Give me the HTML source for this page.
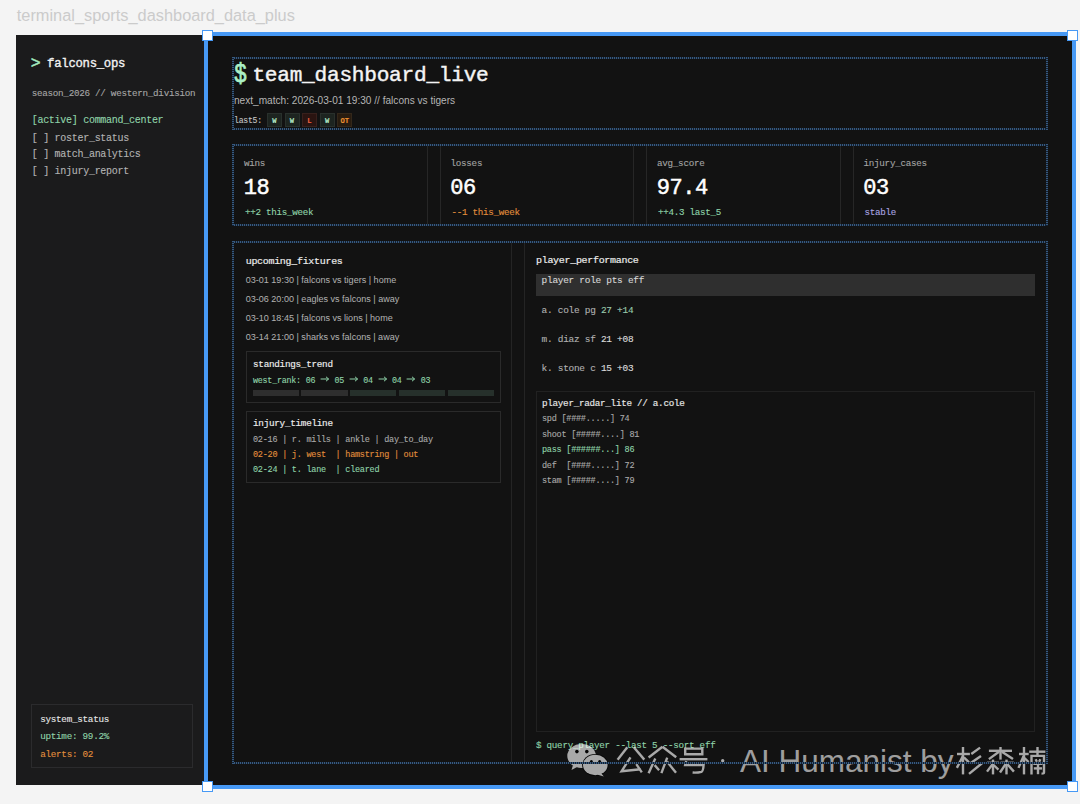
<!DOCTYPE html>
<html><head><meta charset="utf-8"><style>
html,body{margin:0;padding:0;}
body{width:1080px;height:804px;background:#f4f4f4;position:relative;overflow:hidden;}
.a{position:absolute;}
.t{position:absolute;white-space:pre;}
.m{font-family:"Liberation Mono", monospace;}
.s{font-family:"Liberation Sans", sans-serif;}
.badge{box-sizing:border-box;font-family:"Liberation Mono", monospace;font-weight:700;font-size:7.2px;line-height:16px;text-align:center;-webkit-text-stroke:0.1px currentColor;}
</style></head><body>
<div class="t s" style="left:16.80px;top:7.36px;font-size:16.350px;line-height:16.350px;color:#cbcbcb;font-weight:400;">terminal_sports_dashboard_data_plus</div>
<div class="a" style="left:16px;top:35px;width:188px;height:750px;background:#1b1b1c;"></div>
<div class="t m" style="left:30.70px;top:55.76px;font-size:16.500px;line-height:16.500px;color:#a5ecc0;font-weight:400;-webkit-text-stroke:0.45px #a5ecc0;">&gt;</div>
<div class="t m" style="left:47.10px;top:58.07px;font-size:12.314px;line-height:12.314px;color:#f2f2f2;font-weight:400;letter-spacing:-0.284px;-webkit-text-stroke:0.35px #f2f2f2;">falcons_ops</div>
<div class="t m" style="left:31.70px;top:89.36px;font-size:9.240px;line-height:9.240px;color:#a6a6a6;font-weight:400;letter-spacing:-0.264px;-webkit-text-stroke:0.12px #a6a6a6;">season_2026 // western_division</div>
<div class="t m" style="left:31.70px;top:116.47px;font-size:10.028px;line-height:10.028px;color:#8fd3a9;font-weight:400;letter-spacing:-0.287px;-webkit-text-stroke:0.12px #8fd3a9;">[active] command_center</div>
<div class="t m" style="left:31.70px;top:133.67px;font-size:10.028px;line-height:10.028px;color:#b3b3b3;font-weight:400;letter-spacing:-0.287px;-webkit-text-stroke:0.12px #b3b3b3;">[ ] roster_status</div>
<div class="t m" style="left:31.70px;top:149.87px;font-size:10.028px;line-height:10.028px;color:#b3b3b3;font-weight:400;letter-spacing:-0.287px;-webkit-text-stroke:0.12px #b3b3b3;">[ ] match_analytics</div>
<div class="t m" style="left:31.70px;top:166.97px;font-size:10.028px;line-height:10.028px;color:#b3b3b3;font-weight:400;letter-spacing:-0.287px;-webkit-text-stroke:0.12px #b3b3b3;">[ ] injury_report</div>
<div class="a" style="left:31px;top:704px;width:162px;height:64px;box-sizing:border-box;border:1px solid #2b2b2d;"></div>
<div class="t m" style="left:40.20px;top:714.84px;font-size:9.271px;line-height:9.271px;color:#e6e6e6;font-weight:400;letter-spacing:-0.265px;-webkit-text-stroke:0.12px #e6e6e6;">system_status</div>
<div class="t m" style="left:40.20px;top:732.44px;font-size:9.271px;line-height:9.271px;color:#8fd3a9;font-weight:400;letter-spacing:-0.265px;-webkit-text-stroke:0.12px #8fd3a9;">uptime: 99.2%</div>
<div class="t m" style="left:40.20px;top:750.04px;font-size:9.271px;line-height:9.271px;color:#e08e3c;font-weight:400;letter-spacing:-0.265px;-webkit-text-stroke:0.12px #e08e3c;">alerts: 02</div>
<div class="a" style="left:204px;top:32px;width:872px;height:757px;background:#4799f5;"></div>
<div class="a" style="left:208px;top:36px;width:864px;height:749px;background:#121212;"></div>
<div class="a" style="left:232px;top:57px;width:816px;height:2px;background:repeating-linear-gradient(90deg,#37597f 0 1px,#13202f 1px 2px);"></div>
<div class="a" style="left:232px;top:128px;width:816px;height:2px;background:repeating-linear-gradient(90deg,#37597f 0 1px,#13202f 1px 2px);"></div>
<div class="a" style="left:232px;top:57px;width:2px;height:73px;background:repeating-linear-gradient(180deg,#37597f 0 1px,#13202f 1px 2px);"></div>
<div class="a" style="left:1046px;top:57px;width:2px;height:73px;background:repeating-linear-gradient(180deg,#37597f 0 1px,#13202f 1px 2px);"></div>
<div class="t m" style="left:234.00px;top:66.45px;font-size:21.600px;line-height:21.600px;color:#abf0c6;font-weight:400;-webkit-text-stroke:0.6px #abf0c6;transform:scaleY(1.25);transform-origin:0 17px;">$</div>
<div class="t m" style="left:252.40px;top:64.60px;font-size:21.145px;line-height:21.145px;color:#f4f4f4;font-weight:400;letter-spacing:-0.249px;-webkit-text-stroke:0.42px #f4f4f4;">team_dashboard_live</div>
<div class="t s" style="left:234.00px;top:95.98px;font-size:10.100px;line-height:10.100px;color:#b5b5b5;font-weight:400;">next_match: 2026-03-01 19:30 // falcons vs tigers</div>
<div class="t m" style="left:234.00px;top:116.61px;font-size:8.138px;line-height:8.138px;color:#c2c2c2;font-weight:400;letter-spacing:-0.233px;-webkit-text-stroke:0.12px #c2c2c2;">last5:</div>
<div class="a badge" style="left:267px;top:113px;width:15px;height:13.5px;background:#1d2420;box-shadow:inset 0 0 0 1px #29302c;color:#b3e8c6;">W</div>
<div class="a badge" style="left:284.5px;top:113px;width:15px;height:13.5px;background:#1d2420;box-shadow:inset 0 0 0 1px #29302c;color:#b3e8c6;">W</div>
<div class="a badge" style="left:302px;top:113px;width:15px;height:13.5px;background:#2a1411;box-shadow:inset 0 0 0 1px #38201c;color:#ec6040;">L</div>
<div class="a badge" style="left:319.7px;top:113px;width:15px;height:13.5px;background:#1d2420;box-shadow:inset 0 0 0 1px #29302c;color:#b3e8c6;">W</div>
<div class="a badge" style="left:337.3px;top:113px;width:15px;height:13.5px;background:#281c10;box-shadow:inset 0 0 0 1px #33271a;color:#ec9030;">OT</div>
<div class="a" style="left:233px;top:145px;width:194.5px;height:80.5px;box-sizing:border-box;border:1px solid #262626;"></div>
<div class="t m" style="left:244.00px;top:158.56px;font-size:9.240px;line-height:9.240px;color:#a3a3a3;font-weight:400;letter-spacing:-0.264px;-webkit-text-stroke:0.12px #a3a3a3;">wins</div>
<div class="t m" style="left:243.80px;top:178.41px;font-size:22.048px;line-height:22.048px;color:#ffffff;font-weight:400;letter-spacing:-0.509px;-webkit-text-stroke:0.5px #ffffff;">18</div>
<div class="t m" style="left:245.00px;top:208.39px;font-size:9.188px;line-height:9.188px;color:#8fd3a9;font-weight:400;letter-spacing:-0.263px;-webkit-text-stroke:0.12px #8fd3a9;">++2 this_week</div>
<div class="a" style="left:439.5px;top:145px;width:194.5px;height:80.5px;box-sizing:border-box;border:1px solid #262626;"></div>
<div class="t m" style="left:450.50px;top:158.56px;font-size:9.240px;line-height:9.240px;color:#a3a3a3;font-weight:400;letter-spacing:-0.264px;-webkit-text-stroke:0.12px #a3a3a3;">losses</div>
<div class="t m" style="left:450.30px;top:178.41px;font-size:22.048px;line-height:22.048px;color:#ffffff;font-weight:400;letter-spacing:-0.509px;-webkit-text-stroke:0.5px #ffffff;">06</div>
<div class="t m" style="left:451.50px;top:208.39px;font-size:9.188px;line-height:9.188px;color:#e08e3c;font-weight:400;letter-spacing:-0.263px;-webkit-text-stroke:0.12px #e08e3c;">--1 this_week</div>
<div class="a" style="left:646px;top:145px;width:194.5px;height:80.5px;box-sizing:border-box;border:1px solid #262626;"></div>
<div class="t m" style="left:657.00px;top:158.56px;font-size:9.240px;line-height:9.240px;color:#a3a3a3;font-weight:400;letter-spacing:-0.264px;-webkit-text-stroke:0.12px #a3a3a3;">avg_score</div>
<div class="t m" style="left:656.80px;top:178.41px;font-size:22.048px;line-height:22.048px;color:#ffffff;font-weight:400;letter-spacing:-0.509px;-webkit-text-stroke:0.5px #ffffff;">97.4</div>
<div class="t m" style="left:658.00px;top:208.39px;font-size:9.188px;line-height:9.188px;color:#8fd3a9;font-weight:400;letter-spacing:-0.263px;-webkit-text-stroke:0.12px #8fd3a9;">++4.3 last_5</div>
<div class="a" style="left:852.5px;top:145px;width:194.5px;height:80.5px;box-sizing:border-box;border:1px solid #262626;"></div>
<div class="t m" style="left:863.50px;top:158.56px;font-size:9.240px;line-height:9.240px;color:#a3a3a3;font-weight:400;letter-spacing:-0.264px;-webkit-text-stroke:0.12px #a3a3a3;">injury_cases</div>
<div class="t m" style="left:863.30px;top:178.41px;font-size:22.048px;line-height:22.048px;color:#ffffff;font-weight:400;letter-spacing:-0.509px;-webkit-text-stroke:0.5px #ffffff;">03</div>
<div class="t m" style="left:864.50px;top:208.39px;font-size:9.188px;line-height:9.188px;color:#a9a3e0;font-weight:400;letter-spacing:-0.263px;-webkit-text-stroke:0.12px #a9a3e0;">stable</div>
<div class="a" style="left:232px;top:144px;width:816px;height:2px;background:repeating-linear-gradient(90deg,#37597f 0 1px,#13202f 1px 2px);"></div>
<div class="a" style="left:232px;top:224px;width:816px;height:2px;background:repeating-linear-gradient(90deg,#37597f 0 1px,#13202f 1px 2px);"></div>
<div class="a" style="left:232px;top:144px;width:2px;height:82px;background:repeating-linear-gradient(180deg,#37597f 0 1px,#13202f 1px 2px);"></div>
<div class="a" style="left:1046px;top:144px;width:2px;height:82px;background:repeating-linear-gradient(180deg,#37597f 0 1px,#13202f 1px 2px);"></div>
<div class="a" style="left:233px;top:242px;width:278.5px;height:521px;box-sizing:border-box;border:1px solid #242424;"></div>
<div class="a" style="left:524px;top:242px;width:523px;height:521px;box-sizing:border-box;border:1px solid #242424;"></div>
<div class="t m" style="left:245.70px;top:256.79px;font-size:9.975px;line-height:9.975px;color:#ececec;font-weight:400;letter-spacing:-0.285px;-webkit-text-stroke:0.19px #ececec;">upcoming_fixtures</div>
<div class="t s" style="left:245.70px;top:275.55px;font-size:9.050px;line-height:9.050px;color:#b3b3b3;font-weight:400;">03-01 19:30 | falcons vs tigers | home</div>
<div class="t s" style="left:245.70px;top:294.55px;font-size:9.050px;line-height:9.050px;color:#b3b3b3;font-weight:400;">03-06 20:00 | eagles vs falcons | away</div>
<div class="t s" style="left:245.70px;top:313.55px;font-size:9.050px;line-height:9.050px;color:#b3b3b3;font-weight:400;">03-10 18:45 | falcons vs lions | home</div>
<div class="t s" style="left:245.70px;top:332.55px;font-size:9.050px;line-height:9.050px;color:#b3b3b3;font-weight:400;">03-14 21:00 | sharks vs falcons | away</div>
<div class="a" style="left:245.5px;top:350.5px;width:255.5px;height:52.5px;box-sizing:border-box;border:1px solid #2a2a2a;"></div>
<div class="t m" style="left:253.00px;top:359.57px;font-size:9.313px;line-height:9.313px;color:#ececec;font-weight:400;letter-spacing:-0.266px;-webkit-text-stroke:0.177px #ececec;">standings_trend</div>
<div class="t m" style="left:253.00px;top:375.73px;font-size:8.400px;line-height:8.400px;color:#8fd3a9;font-weight:400;letter-spacing:-0.240px;-webkit-text-stroke:0.12px #8fd3a9;">west_rank: 06 <svg width="9.6" height="6" viewBox="0 0 9.6 6" style="vertical-align:0.5px"><path d="M0.6 3H8.6M6 0.8L8.6 3L6 5.2" fill="none" stroke="#8fd3a9" stroke-width="1"/></svg> 05 <svg width="9.6" height="6" viewBox="0 0 9.6 6" style="vertical-align:0.5px"><path d="M0.6 3H8.6M6 0.8L8.6 3L6 5.2" fill="none" stroke="#8fd3a9" stroke-width="1"/></svg> 04 <svg width="9.6" height="6" viewBox="0 0 9.6 6" style="vertical-align:0.5px"><path d="M0.6 3H8.6M6 0.8L8.6 3L6 5.2" fill="none" stroke="#8fd3a9" stroke-width="1"/></svg> 04 <svg width="9.6" height="6" viewBox="0 0 9.6 6" style="vertical-align:0.5px"><path d="M0.6 3H8.6M6 0.8L8.6 3L6 5.2" fill="none" stroke="#8fd3a9" stroke-width="1"/></svg> 03</div>
<div class="a" style="left:252.5px;top:389.5px;width:46.25px;height:6.25px;background:#2e2e2e;"></div>
<div class="a" style="left:301.25px;top:389.5px;width:46.25px;height:6.25px;background:#2e2e2e;"></div>
<div class="a" style="left:350.0px;top:389.5px;width:46.25px;height:6.25px;background:#26302b;"></div>
<div class="a" style="left:398.75px;top:389.5px;width:46.25px;height:6.25px;background:#26302b;"></div>
<div class="a" style="left:447.5px;top:389.5px;width:46.25px;height:6.25px;background:#26302b;"></div>
<div class="a" style="left:245.5px;top:410.5px;width:255.5px;height:72.5px;box-sizing:border-box;border:1px solid #2a2a2a;"></div>
<div class="t m" style="left:253.00px;top:418.82px;font-size:9.313px;line-height:9.313px;color:#ececec;font-weight:400;letter-spacing:-0.266px;-webkit-text-stroke:0.177px #ececec;">injury_timeline</div>
<div class="t m" style="left:253.00px;top:435.68px;font-size:8.505px;line-height:8.505px;color:#a8a8a8;font-weight:400;letter-spacing:-0.243px;-webkit-text-stroke:0.12px #a8a8a8;white-space:pre">02-16 | r. mills | ankle | day_to_day</div>
<div class="t m" style="left:253.00px;top:450.68px;font-size:8.505px;line-height:8.505px;color:#e08e3c;font-weight:400;letter-spacing:-0.243px;-webkit-text-stroke:0.12px #e08e3c;white-space:pre">02-20 | j. west  | hamstring | out</div>
<div class="t m" style="left:253.00px;top:465.68px;font-size:8.505px;line-height:8.505px;color:#8fd3a9;font-weight:400;letter-spacing:-0.243px;-webkit-text-stroke:0.12px #8fd3a9;white-space:pre">02-24 | t. lane  | cleared</div>
<div class="t m" style="left:536.00px;top:256.49px;font-size:9.975px;line-height:9.975px;color:#ececec;font-weight:400;letter-spacing:-0.285px;-webkit-text-stroke:0.19px #ececec;">player_performance</div>
<div class="a" style="left:536px;top:274px;width:499px;height:22px;background:#2f2f2f;"></div>
<div class="t m" style="left:541.60px;top:275.86px;font-size:9.450px;line-height:9.450px;color:#d6d6d6;font-weight:400;letter-spacing:-0.270px;-webkit-text-stroke:0.12px #d6d6d6;">player role pts eff</div>
<div class="t m" style="left:541.60px;top:305.76px;font-size:9.450px;line-height:9.450px;color:#b0b0b0;font-weight:400;letter-spacing:-0.270px;-webkit-text-stroke:0.12px #b0b0b0;">a. cole pg <span style="color:#8fd3a9">27 +14</span></div>
<div class="t m" style="left:541.60px;top:334.86px;font-size:9.450px;line-height:9.450px;color:#b0b0b0;font-weight:400;letter-spacing:-0.270px;-webkit-text-stroke:0.12px #b0b0b0;">m. diaz sf <span style="color:#e6e6e6">21 +08</span></div>
<div class="t m" style="left:541.60px;top:363.96px;font-size:9.450px;line-height:9.450px;color:#b0b0b0;font-weight:400;letter-spacing:-0.270px;-webkit-text-stroke:0.12px #b0b0b0;">k. stone c <span style="color:#e6e6e6">15 +03</span></div>
<div class="a" style="left:536px;top:391px;width:499px;height:341px;box-sizing:border-box;border:1px solid #212121;"></div>
<div class="t m" style="left:542.00px;top:399.36px;font-size:9.240px;line-height:9.240px;color:#e6e6e6;font-weight:400;letter-spacing:-0.264px;-webkit-text-stroke:0.176px #e6e6e6;">player_radar_lite // a.cole</div>
<div class="t m" style="left:542.00px;top:415.43px;font-size:8.505px;line-height:8.505px;color:#a8a8a8;font-weight:400;letter-spacing:-0.243px;-webkit-text-stroke:0.12px #a8a8a8;white-space:pre">spd [####.....] 74</div>
<div class="t m" style="left:542.00px;top:430.88px;font-size:8.505px;line-height:8.505px;color:#a8a8a8;font-weight:400;letter-spacing:-0.243px;-webkit-text-stroke:0.12px #a8a8a8;white-space:pre">shoot [#####....] 81</div>
<div class="t m" style="left:542.00px;top:446.33px;font-size:8.505px;line-height:8.505px;color:#8fd3a9;font-weight:400;letter-spacing:-0.243px;-webkit-text-stroke:0.12px #8fd3a9;white-space:pre">pass [######...] 86</div>
<div class="t m" style="left:542.00px;top:461.78px;font-size:8.505px;line-height:8.505px;color:#a8a8a8;font-weight:400;letter-spacing:-0.243px;-webkit-text-stroke:0.12px #a8a8a8;white-space:pre">def  [####.....] 72</div>
<div class="t m" style="left:542.00px;top:477.23px;font-size:8.505px;line-height:8.505px;color:#a8a8a8;font-weight:400;letter-spacing:-0.243px;-webkit-text-stroke:0.12px #a8a8a8;white-space:pre">stam [#####....] 79</div>
<div class="t m" style="left:536.00px;top:741.06px;font-size:9.240px;line-height:9.240px;color:#8fd3a9;font-weight:400;letter-spacing:-0.264px;-webkit-text-stroke:0.12px #8fd3a9;">$ query_player --last 5 --sort eff</div>
<svg class="a" style="left:0;top:0" width="1080" height="804" viewBox="0 0 1080 804"><g opacity="0.64">
<g fill="#ffffff">
<ellipse cx="581.6" cy="756" rx="14.3" ry="11.9"/>
<path d="M573 765 L571.5 770 L578 766.5 Z"/>
</g>
<ellipse cx="595.3" cy="765" rx="13.2" ry="11" fill="#000000"/>
<g fill="#ffffff">
<ellipse cx="595.3" cy="765" rx="12.3" ry="10.2"/>
<path d="M601 773 L603.8 776.6 L597 774.5 Z"/>
</g>
<g fill="#000000">
<circle cx="576.9" cy="751.6" r="1.8"/><circle cx="586.8" cy="751.6" r="1.8"/>
<circle cx="591.4" cy="761.5" r="1.5"/><circle cx="599.6" cy="761.5" r="1.5"/>
</g>
<circle cx="722.7" cy="760.7" r="1.7" fill="#ffffff"/>
<g fill="none" stroke="#ffffff" stroke-width="2.4" stroke-linecap="butt" stroke-linejoin="miter"><path d="M627.3 747.3L617.6 759.8"/><path d="M633.8 747.3L644.3 759.6"/><path d="M630.5 757.3L621.6 771.2L640.5 769.2"/><path d="M636.3 764.2L641.8 772.3"/><path d="M662.5 746.8L648.6 757.5"/><path d="M662.5 746.8L676.2 757.3"/><path d="M655.3 758.4L648.6 773.2"/><path d="M654.6 765.1L659.1 770.2"/><path d="M667.2 757.6L661.4 773.2"/><path d="M667.0 761.6L676.0 772.8"/><path d="M685.2 748.6H702.3V754.2H685.2Z"/><path d="M679.6 759.2H707.4"/><path d="M686.2 761.0L685.2 765.0H703.6Q703.2 771.2 701.5 771.8Q697 772.9 692.6 772.5"/><path d="M957.0 754.0H969.9"/><path d="M963.0 747.0V774.4"/><path d="M963.0 755.9L956.9 767.9"/><path d="M963.9 757.3L969.0 762.4"/><path d="M980.1 747.6L971.3 754.0"/><path d="M981.0 755.9L970.4 763.3"/><path d="M982.0 763.3L969.0 773.9"/><path d="M988.9 750.8H1012.0"/><path d="M1000.5 747.0V759.6"/><path d="M999.0 751.7L988.9 759.1"/><path d="M1001.9 751.7L1013.0 759.1"/><path d="M987.0 762.8H999.0"/><path d="M993.0 759.6V774.4"/><path d="M992.6 764.2L987.0 771.6"/><path d="M993.6 765.0L998.4 769.6"/><path d="M1000.5 762.8H1013.9"/><path d="M1006.5 759.6V774.4"/><path d="M1005.6 764.2L1000.0 772.5"/><path d="M1007.4 764.2L1013.9 771.6"/><path d="M1019.0 754.0H1028.7"/><path d="M1024.0 747.0V774.4"/><path d="M1023.6 755.9L1018.5 767.9"/><path d="M1024.5 758.0L1028.6 762.0"/><path d="M1029.2 751.7H1045.4"/><path d="M1037.5 747.0V755.9"/><path d="M1031.5 774.4V755.9H1044.0V772.6Q1044 773.6 1041.5 773.6"/><path d="M1035.6 759.2L1036.9 761.8"/><path d="M1040.4 759.2L1039.1 761.8"/><path d="M1033.3 763.8H1042.6"/><path d="M1033.8 768.4H1042.1"/><path d="M1038.0 763.8V774.2"/></g>
</g></svg>
<div class="t s" style="left:740.00px;top:745.93px;font-size:31.500px;line-height:31.500px;color:rgba(255,255,255,0.6);font-weight:400;">AI Humanist by</div>
<div class="a" style="left:232px;top:241px;width:816px;height:2px;background:repeating-linear-gradient(90deg,#37597f 0 1px,#13202f 1px 2px);"></div>
<div class="a" style="left:232px;top:762px;width:816px;height:2px;background:repeating-linear-gradient(90deg,#37597f 0 1px,#13202f 1px 2px);"></div>
<div class="a" style="left:232px;top:241px;width:2px;height:523px;background:repeating-linear-gradient(180deg,#37597f 0 1px,#13202f 1px 2px);"></div>
<div class="a" style="left:1046px;top:241px;width:2px;height:523px;background:repeating-linear-gradient(180deg,#37597f 0 1px,#13202f 1px 2px);"></div>
<div class="a" style="left:201.5px;top:29.5px;width:11.0px;height:11.0px;background:#ffffff;box-sizing:border-box;border:1px solid #4799f5;"></div>
<div class="a" style="left:1067.0px;top:29.5px;width:11.0px;height:11.0px;background:#ffffff;box-sizing:border-box;border:1px solid #4799f5;"></div>
<div class="a" style="left:201.5px;top:780.5px;width:11.0px;height:11.0px;background:#ffffff;box-sizing:border-box;border:1px solid #4799f5;"></div>
<div class="a" style="left:1067.0px;top:780.5px;width:11.0px;height:11.0px;background:#ffffff;box-sizing:border-box;border:1px solid #4799f5;"></div>
</body></html>
